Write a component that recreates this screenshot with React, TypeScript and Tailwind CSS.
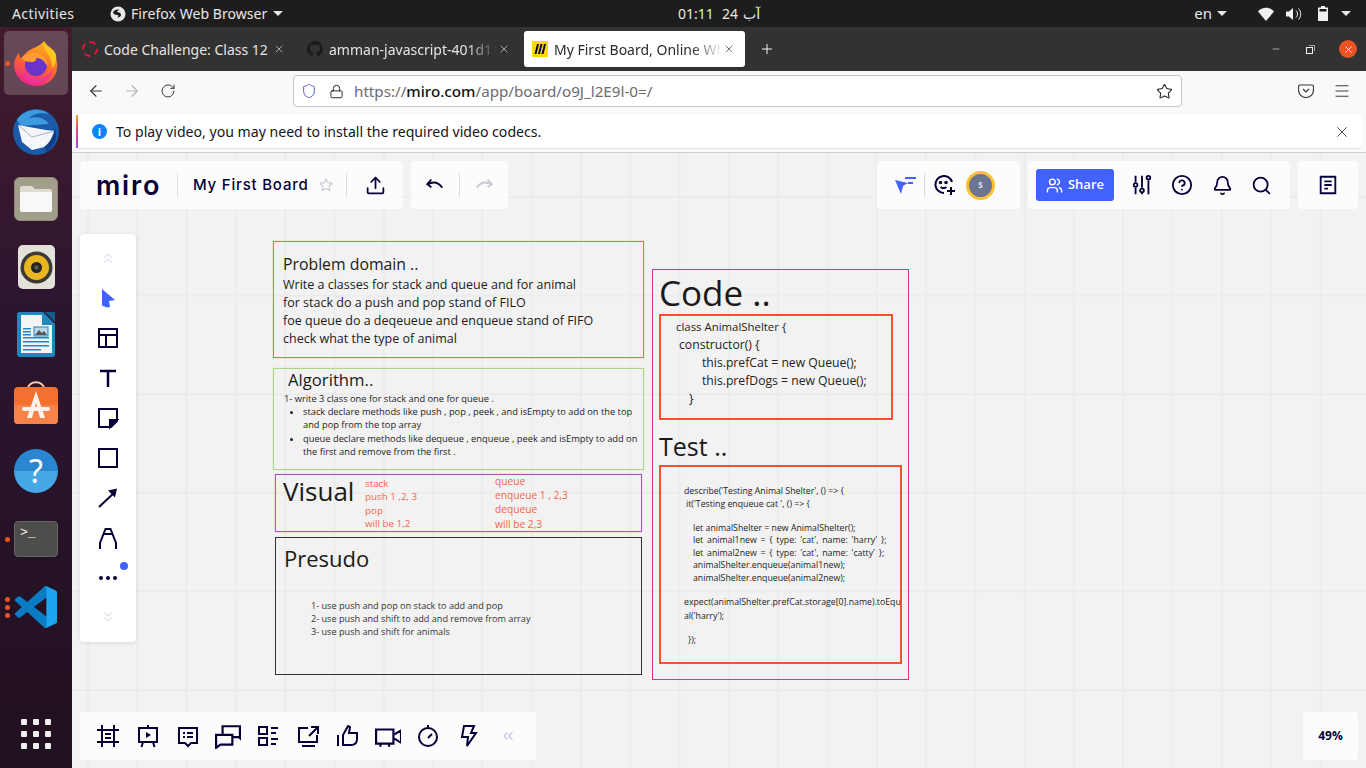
import { ArrowLeft, ArrowRight, Bell, ChevronsDown, ChevronsLeft, ChevronsUp, CircleHelp, Lock, Menu, Minus, Plus, RotateCw, Search, Shield, Star, Upload, Users, X } from 'lucide-react';
import type { ReactNode } from 'react';

const NAVY = '#050038';

function Ico({ children, size = 24, className = '' }: { children: ReactNode; size?: number; className?: string }) {
  return (
    <svg width={size} height={size} viewBox="0 0 24 24" fill="none" stroke={NAVY} strokeWidth="2" className={className}>
      {children}
    </svg>
  );
}

function Caret({ className = '' }: { className?: string }) {
  return <span className={`inline-block w-0 h-0 border-l-[5px] border-r-[5px] border-t-[5px] border-l-transparent border-r-transparent border-t-[#e6e6e6] ${className}`}></span>;
}

/* dock icons */
function FirefoxIcon() {
  return (
    <svg width="48" height="48" viewBox="0 0 48 48">
      <defs>
        <linearGradient id="ffBody" x1="0.7" y1="0" x2="0.3" y2="1">
          <stop offset="0" stopColor="#ffb61e" />
          <stop offset="0.5" stopColor="#ff6a2b" />
          <stop offset="1" stopColor="#e8208f" />
        </linearGradient>
      </defs>
      <path d="M32 2c1 5 5 7 8 11 4 5 6 10 5 16-1 11-10 18-21 18C12 47 3 38 2 27c0-5 2-10 5-13 0 3 1 5 3 6 2-6 7-9 12-11 4-2 8-4 10-7z" fill="url(#ffBody)" />
      <circle cx="24" cy="26" r="11" fill="#6a33c9" />
      <path d="M9 19c5-5 13-7 19-4 5 2 8 7 7 12-2-5-6-8-11-8 1 2-1 4-4 4-5 0-8-1-11-4z" fill="#ff9d2e" />
      <path d="M32 2c-1 5 1 9 4 13 3 5 4 9 4 14 3-3 5-8 4-13-1-6-9-8-12-14z" fill="#ffc61e" />
      <path d="M13 32c3 6 10 9 17 7 5-1 9-5 11-10-1 9-9 15-18 15-8 0-13-5-10-12z" fill="#f0359a" />
    </svg>
  );
}

function ThunderbirdIcon() {
  return (
    <svg width="50" height="50" viewBox="0 0 50 50">
      <circle cx="25" cy="26" r="23" fill="#1a5aa8" />
      <path d="M6 14C12 4 28 0 38 8c-8-2-16 0-20 4 8-2 16 0 20 6L10 20z" fill="#3d9be0" />
      <path d="M7 19l28 5 9 1-2 14-21 5-10-8z" fill="#f5f6fa" />
      <path d="M7 19l14 12 23-6" fill="none" stroke="#a9b0bf" strokeWidth="1" />
      <path d="M44 22c3 8 0 18-8 24l-3-5c6-4 9-11 11-19z" fill="#0f3f86" />
    </svg>
  );
}

function FilesIcon() {
  return (
    <div className="w-11 h-11 rounded-[6px] bg-[#a39d8c] border border-[#8e8978] flex items-center justify-center">
      <svg width="34" height="30" viewBox="0 0 34 30">
        <path d="M1 4a2 2 0 0 1 2-2h10l3 3h15a2 2 0 0 1 2 2v4H1z" fill="#dedbd2" />
        <path d="M1 8h30a2 2 0 0 1 2 2v16a2 2 0 0 1-2 2H3a2 2 0 0 1-2-2z" fill="#faf9f7" />
      </svg>
    </div>
  );
}

function RhythmboxIcon() {
  return (
    <div className="w-[37px] h-11 rounded-[5px] bg-[#e4e1d8] flex items-center justify-center">
      <svg width="33" height="33" viewBox="0 0 33 33">
        <circle cx="16.5" cy="16.5" r="16" fill="#3b3a38" />
        <circle cx="16.5" cy="16.5" r="12.5" fill="#e9b622" />
        <circle cx="16.5" cy="16.5" r="5.5" fill="#25231f" />
        <circle cx="16.5" cy="16.5" r="2.2" fill="#5a5852" />
      </svg>
    </div>
  );
}

function WriterIcon() {
  return (
    <svg width="38" height="46" viewBox="0 0 38 46">
      <path d="M3 0h23l12 12v30a3 3 0 0 1-3 3H3a3 3 0 0 1-3-3V3a3 3 0 0 1 3-3z" fill="#1e87be" />
      <path d="M4 3h21v10h10v28H4z" fill="#f3f4f4" />
      <path d="M28 0l10 10V0z" fill="#135d8c" />
      <path d="M6 16h8v1.500H6zM6 19h8v1.500H6zM6 22h8v1.500H6zM6 25h26v1.500H6zM6 29h26v1.500H6zM6 33h26v1.500H6zM6 37h18v1.500H6z" fill="#1e87be" />
      <rect x="17" y="15" width="14" height="9" fill="#bcd7e7" stroke="#1e87be" />
      <path d="M18 23l4-5 3 3 2-2 3 4z" fill="#555" />
    </svg>
  );
}

function SoftwareIcon() {
  return (
    <svg width="44" height="44" viewBox="0 0 44 44">
      <path d="M14 8c0-9 16-9 16 0" fill="none" stroke="#f1d3b4" strokeWidth="2" />
      <rect x="0" y="6" width="44" height="37" rx="4" fill="#f3702f" />
      <path d="M0 24h44v15a4 4 0 0 1-4 4H4a4 4 0 0 1-4-4z" fill="#f7824a" />
      <path d="M22 10l-9 27h5l4-15 4 15h5z" fill="#fdf3ec" />
      <rect x="8" y="26" width="28" height="4" rx="2" fill="#fdf3ec" />
    </svg>
  );
}

function HelpIcon() {
  return (
    <div className="w-11 h-11 rounded-full bg-[linear-gradient(#2a86d0_0%,#2a86d0_50%,#46a7e6_50%,#46a7e6_100%)] flex items-center justify-center text-white text-[32px] leading-none">?</div>
  );
}

function TerminalIcon() {
  return (
    <div className="w-11 h-9 rounded-[4px] bg-[#4d4d4b] border border-[#656563] pl-[5px] text-[#f5f5f5] text-[13px] leading-[22px] [font-family:'Liberation_Mono',monospace]">&gt;_</div>
  );
}

function VsCodeIcon() {
  return (
    <svg width="42" height="42" viewBox="0 0 100 100">
      <path d="M96.500 10.800L75.900.9a6.200 6.200 0 0 0-7.100 1.200L29.300 38.100 12.100 25.100a4.200 4.200 0 0 0-5.300.2L1.300 30.300a4.200 4.200 0 0 0 0 6.200L16.200 50 1.300 63.600a4.200 4.200 0 0 0 0 6.200l5.500 5a4.200 4.200 0 0 0 5.300.2L29.300 62l39.500 36a6.200 6.200 0 0 0 7.100 1.200l20.600-9.900A6.200 6.200 0 0 0 100 83.700V16.300a6.200 6.200 0 0 0-3.500-5.500zM75 72.700L45 50l30-22.700z" fill="#0a7cc4" />
      <path d="M75.900 99.100a6.200 6.200 0 0 1-7.100-1.200c2.300 2.300 6.200.7 6.200-2.600V4.700c0-3.300-3.900-4.900-6.200-2.600a6.200 6.200 0 0 1 7.100-1.200l20.600 9.900A6.200 6.200 0 0 1 100 16.300v67.400a6.200 6.200 0 0 1-3.500 5.600z" fill="#1fa5f0" />
    </svg>
  );
}

function Dots({ n }: { n: number }) {
  return (
    <div className="absolute left-[5px] top-0 bottom-0 flex flex-col justify-center gap-[3px]">
      {Array.from({ length: n }).map((_, i) => (
        <span key={i} className="w-[5px] h-[5px] rounded-full bg-[#e95420]"></span>
      ))}
    </div>
  );
}

const DOCK = [
  { id: 'firefox', icon: <FirefoxIcon />, dots: 1, active: true },
  { id: 'thunderbird', icon: <ThunderbirdIcon />, dots: 0 },
  { id: 'files', icon: <FilesIcon />, dots: 0 },
  { id: 'rhythmbox', icon: <RhythmboxIcon />, dots: 0 },
  { id: 'writer', icon: <WriterIcon />, dots: 0 },
  { id: 'software', icon: <SoftwareIcon />, dots: 0 },
  { id: 'help', icon: <HelpIcon />, dots: 0 },
  { id: 'terminal', icon: <TerminalIcon />, dots: 1 },
  { id: 'vscode', icon: <VsCodeIcon />, dots: 3 },
];

function Dock() {
  return (
    <aside className="w-[72px] shrink-0 flex flex-col pt-[2px] bg-[linear-gradient(#421b2c,#2c1530_40%,#21101f)]">
      {DOCK.map((item) => (
        <div key={item.id} className="relative h-[68px] flex items-center justify-center">
          <div className={`w-16 h-16 rounded-[5px] flex items-center justify-center ${item.active ? 'bg-white/20' : ''}`}>{item.icon}</div>
          {item.dots > 0 && <Dots n={item.dots} />}
        </div>
      ))}
      <div className="mt-auto mb-[19px] mx-auto grid grid-cols-3 gap-[6px]">
        {Array.from({ length: 9 }).map((_, i) => (
          <span key={i} className="w-[6px] h-[6px] rounded-[1px] bg-[#eeeeee]"></span>
        ))}
      </div>
    </aside>
  );
}

function TopBar() {
  return (
    <header className="h-[27px] shrink-0 bg-[#1d1d1d] text-[#e8e8e8] text-[14px] flex items-center">
      <div className="w-[678px] flex items-center shrink-0">
        <span className="ml-3 w-[98px] tracking-[0.4px]">Activities</span>
        <svg width="16" height="16" viewBox="0 0 16 16" className="mr-[5px]">
          <circle cx="8" cy="8" r="7.500" fill="#e8e8e8" />
          <path d="M3 6c2-3 5-3 7-2-2 0-3 1-3 2 2 0 4 1 4 3s-3 3-4 2c2 0 2-2 0-2-2 0-4-1-4-3z" fill="#1d1d1d" />
        </svg>
        <span className="tracking-[0.05px]">Firefox Web Browser</span>
        <Caret className="ml-[6px]" />
      </div>
      <div className="flex items-center text-[14px] [font-family:'Noto_Sans','DejaVu_Sans',sans-serif]">
        <span className="w-[44px]">01:11</span>
        <span className="w-[21px]">24</span>
        <span>آب</span>
      </div>
      <div className="ml-auto flex items-center">
        <span className="text-[15px]">en</span>
        <Caret className="ml-[5px] mr-[31px]" />
        <svg width="16" height="14" viewBox="0 0 16 14" className="mr-3">
          <path d="M0 4.500C4-.5 12-.5 16 4.500L8 14z" fill="#f0f0f0" />
        </svg>
        <svg width="16" height="14" viewBox="0 0 16 14" className="mr-[16px]">
          <path d="M0 4.500h3L7 1v12L3 9.500H0z" fill="#f0f0f0" />
          <path d="M10 3.500c2 2 2 5 0 7M12.500 1.500c3 3 3 8 0 11" stroke="#f0f0f0" strokeWidth="1" fill="none" />
        </svg>
        <svg width="10" height="15" viewBox="0 0 10 15" className="mr-[13px]">
          <path d="M3 0h4v1.500h3V15H0V1.500h3z" fill="#f0f0f0" />
          <rect x="1.500" y="3" width="7" height="2.500" fill="#1d1d1d" />
        </svg>
        <Caret className="mr-[15px]" />
      </div>
    </header>
  );
}

function Tab({ label, icon, active, className, faded }: { label: string; icon: ReactNode; active?: boolean; className: string; faded?: boolean }) {
  return (
    <div className={`h-9 flex items-center rounded-[3px] shrink-0 ${className} ${active ? 'bg-white text-[#2a2a2e]' : 'text-[#e4e4e4]'}`}>
      <span className="w-4 h-4 shrink-0 mr-[6px] flex items-center justify-center">{icon}</span>
      <span className={`flex-1 whitespace-nowrap overflow-hidden text-[14px] ${faded ? '[mask-image:linear-gradient(90deg,#000_82%,transparent)]' : ''}`}>{label}</span>
      <X size={12} strokeWidth={1.300} className="ml-[1px] shrink-0" />
    </div>
  );
}

function TabBar() {
  return (
    <div className="h-11 shrink-0 bg-[#333233] flex items-center pl-px">
      <Tab
        className="w-[225px] pl-[9px] pr-[13px]"
        label="Code Challenge: Class 12"
        icon={<span className="w-4 h-4 rounded-full border-2 border-dashed border-[#e3123c]"></span>}
      />
      <Tab
        faded
        className="w-[226px] pl-[9px] pr-[14px]"
        label="amman-javascript-401d11"
        icon={
          <svg width="16" height="16" viewBox="0 0 16 16">
            <path d="M8 0a8 8 0 0 0-2.500 15.600c.4.1.5-.2.5-.4v-1.400c-2.200.5-2.700-1-2.700-1-.4-.9-.9-1.200-.9-1.200-.7-.5.1-.5.1-.5.8.1 1.200.8 1.200.8.7 1.200 1.900.9 2.300.7.1-.5.3-.9.5-1.100-1.800-.2-3.600-.9-3.600-4 0-.9.3-1.600.8-2.100-.1-.2-.4-1 .1-2.100 0 0 .7-.2 2.200.8a7.600 7.600 0 0 1 4 0c1.500-1 2.200-.8 2.200-.8.4 1.100.2 1.900.1 2.100.5.6.8 1.300.8 2.100 0 3.100-1.900 3.700-3.600 3.900.3.2.5.7.5 1.500v2.200c0 .2.100.5.6.4A8 8 0 0 0 8 0z" fill="#1a1a1b" />
          </svg>
        }
      />
      <Tab
        active
        faded
        className="w-[221px] pl-[8px] pr-[10px]"
        label="My First Board, Online Whiteboard"
        icon={
          <svg width="16" height="16" viewBox="0 0 16 16">
            <rect width="16" height="16" fill="#ffd800" />
            <path d="M5 3h2L4.500 13h-2zM8.500 3h2L8 13H6zM12 3h2l-2.500 10h-2z" fill="#050038" />
          </svg>
        }
      />
      <Plus size={16} strokeWidth={1.500} className="ml-[14px] text-[#f2f2f2]" />
      <div className="ml-auto flex items-center text-[#f2f2f2]">
        <Minus size={10} strokeWidth={1.500} className="mr-[25px]" />
        <svg width="9" height="9" viewBox="0 0 9 9" className="mr-[24px]">
          <rect x="0.500" y="2.500" width="6" height="6" fill="none" stroke="#f2f2f2" />
          <path d="M3 .5h5.500V6" fill="none" stroke="#f2f2f2" strokeOpacity="0.6" />
        </svg>
        <span className="w-[18px] h-[18px] mr-[9px] rounded-full bg-[#e95420] flex items-center justify-center">
          <X size={11} strokeWidth={2} className="text-white" />
        </span>
      </div>
    </div>
  );
}

function NavBar() {
  return (
    <div className="h-11 shrink-0 bg-[#f9f9fa] flex items-center pb-1 text-[#38383d]">
      <ArrowLeft size={18} strokeWidth={1.500} className="ml-[15px]" />
      <ArrowRight size={18} strokeWidth={1.500} className="ml-[18px] text-[#b3b3b7]" />
      <RotateCw size={16} strokeWidth={1.500} className="ml-[19px]" />
      <div className="ml-[117px] w-[889px] h-8 bg-white border border-[#c4c4c6] rounded-[4px] flex items-center pl-[7px] pr-2">
        <Shield size={16} strokeWidth={1.500} className="text-[#5b5bd6]" />
        <Lock size={15} strokeWidth={1.500} className="ml-[12px] text-[#222]" />
        <span className="ml-[10px] text-[15.200px] text-[#6b6b70]">https://<span className="text-[#111] font-medium">miro.com</span>/app/board/o9J_l2E9l-0=/</span>
        <Star size={17} strokeWidth={1.500} className="ml-auto text-[#222]" />
      </div>
      <svg width="16" height="14" viewBox="0 0 16 14" className="ml-[116px]">
        <path d="M2 1h12a1.500 1.500 0 0 1 1.500 1.500V6A7.500 7.500 0 0 1 .5 6V2.500A1.500 1.500 0 0 1 2 1z" fill="none" stroke="#38383d" strokeWidth="1.200" />
        <path d="M5 5l3 3 3-3" fill="none" stroke="#38383d" strokeWidth="1.200" />
      </svg>
      <Menu size={18} strokeWidth={1.300} className="ml-[19px]" />
    </div>
  );
}

function InfoBar() {
  return (
    <div className="h-[38px] shrink-0 bg-[#f9f9fa] px-1 pb-1 border-b border-[#cfcfd1]">
      <div className="h-[33px] bg-white rounded-[3px] flex items-center text-[14.100px] text-[#15141a] shadow-[0_1px_1px_rgba(0,0,0,0.08)]">
        <span className="w-[2px] h-full bg-[linear-gradient(#f5a623,#e0457b_45%,#9b4fe0)]"></span>
        <span className="ml-[14px] w-[15px] h-[15px] rounded-full bg-[#0a84ff] text-white text-[11px] leading-[15px] text-center font-bold">i</span>
        <span className="ml-[9px]">To play video, you may need to install the required video codecs.</span>
        <X size={18} strokeWidth={1.200} className="ml-auto mr-[11px] text-[#45454a]" />
      </div>
    </div>
  );
}

function Panel({ children, className = '' }: { children: ReactNode; className?: string }) {
  return <div className={`h-12 bg-white/80 rounded-[4px] flex items-center ${className}`}>{children}</div>;
}

function Divider({ className = '' }: { className?: string }) {
  return <span className={`w-px h-6 bg-[#dcdce3] ${className}`}></span>;
}

function BoardToolbar() {
  return (
    <div className="absolute left-2 right-2 top-2 flex">
      <Panel className="w-[323px] mr-2">
        <span className="ml-[16px] w-[65px] text-[27px] font-semibold leading-none tracking-[1.800px] text-[#050038] [font-family:'Inter',sans-serif]">miro</span>
        <Divider className="ml-[16px]" />
        <span className="ml-[15px] text-[15px] font-medium tracking-[0.8px] text-[#050038] [font-family:'Inter',sans-serif]">My First Board</span>
        <Star size={14} strokeWidth={2} className="ml-[10px] text-[#c9c9d6]" />
        <Divider className="ml-[13px]" />
        <Upload size={21} strokeWidth={2} className="ml-[18px] text-[#050038]" />
      </Panel>
      <Panel className="w-[97px]">
        <Ico size={22} className="ml-[13px]"><path d="M8 6L3.500 11 8 14.500" /><path d="M4 11c6-3 12-2 16 4" /></Ico>
        <Divider className="ml-[13px]" />
        <Ico size={22} className="ml-[13px] opacity-20"><path d="M16 6l4.500 5-4.500 3.500" /><path d="M20 11c-6-3-12-2-16 4" /></Ico>
      </Panel>
      <Panel className="w-[143px] ml-auto">
        <svg width="24" height="24" viewBox="0 0 24 24" className="ml-[17px]">
          <path d="M1 7l13 3-5 3-2 8z" fill="#4262ff" />
          <path d="M11 4h11v2H11zM14 9h5v2h-5z" fill="#4262ff" />
        </svg>
        <Divider className="ml-[6px] h-[24px]" />
        <svg width="24" height="24" viewBox="0 0 24 24" fill="none" stroke={NAVY} strokeWidth="2" className="ml-[7px]">
          <path d="M12 20a8.500 8.500 0 1 1 8-11" />
          <path d="M8.500 14c2 1.500 4 1.500 6 0" />
          <circle cx="8.500" cy="9.500" r="0.800" />
          <circle cx="14" cy="9.500" r="0.800" />
          <path d="M19 14v8M15 18h8" />
        </svg>
        <span className="ml-[10px] w-[29px] h-[29px] rounded-full bg-[#6b7591] border-[3px] border-[#fdc02f] text-[8px] font-bold text-[#e5e7ee] flex items-center justify-center">S</span>
      </Panel>
      <Panel className="w-[262px] ml-2">
        <span className="ml-2 w-[78px] h-8 rounded-[3px] bg-[#4262ff] text-white text-[13px] font-semibold flex items-center justify-center gap-[5px]">
          <Users size={17} strokeWidth={2} />Share
        </span>
        <Ico size={22} className="ml-[17px]">
          <path d="M5 2v7M5 15v7M12 2v13M12 20v2M19 7v15" />
          <circle cx="5" cy="12" r="2" />
          <circle cx="12" cy="18" r="2" />
          <circle cx="19" cy="4" r="2" />
        </Ico>
        <CircleHelp size={22} strokeWidth={2} className="ml-[18px] text-[#050038]" />
        <Bell size={21} strokeWidth={2} className="ml-[19px] text-[#050038]" />
        <Search size={21} strokeWidth={2} className="ml-[18px] text-[#050038]" />
      </Panel>
      <Panel className="w-[60px] ml-2 justify-center">
        <Ico size={22}>
          <path d="M4 3h16v18H4z" />
          <path d="M8 8h8M8 12h8M8 16h4" />
        </Ico>
      </Panel>
    </div>
  );
}

const SIDE_ITEMS: { id: string; node: ReactNode }[] = [
  {
    id: 'select',
    node: (
      <svg width="24" height="24" viewBox="0 0 24 24">
        <path d="M6 3l13 11-6 1 1 6-3 .5-5-2z" fill="#4262ff" />
      </svg>
    ),
  },
  { id: 'layout', node: <Ico><path d="M3 3h18v18H3zM3 9h18M10 9v12" /></Ico> },
  { id: 'text', node: <Ico><path d="M4 5h16M12 5v16" strokeWidth="2.500" /></Ico> },
  { id: 'sticky', node: <Ico><path d="M3 3h18v12l-6 6H3z" /><path d="M21 14h-7v7z" fill={NAVY} /></Ico> },
  { id: 'shape', node: <Ico><rect x="3" y="3" width="18" height="18" /></Ico> },
  { id: 'arrow', node: <Ico><path d="M3 21L19 6" /><path d="M12 4.500l9-2-2 9z" fill={NAVY} stroke="none" /></Ico> },
  { id: 'pen', node: <Ico><path d="M4 23v-6L9.500 3h5L20 17v6M7 8h10" /></Ico> },
  {
    id: 'more',
    node: (
      <div className="relative w-6 h-6 flex items-center justify-center">
        <svg width="20" height="6" viewBox="0 0 20 6"><circle cx="3" cy="3" r="2" fill={NAVY} /><circle cx="10" cy="3" r="2" fill={NAVY} /><circle cx="17" cy="3" r="2" fill={NAVY} /></svg>
        <span className="absolute -top-1 -right-2 w-2 h-2 rounded-full bg-[#4262ff]"></span>
      </div>
    ),
  },
];

function SideToolbar() {
  return (
    <div className="absolute left-2 top-[81px] w-14 h-[408px] bg-white rounded-[4px] shadow-[0_1px_4px_rgba(5,0,56,0.1)] flex flex-col items-center pt-4">
      <ChevronsUp size={16} strokeWidth={2} className="text-[#e4e4ec]" />
      <div className="mt-[12px] flex flex-col items-center">
        {SIDE_ITEMS.map((it) => (
          <div key={it.id} className="h-10 flex items-center justify-center">{it.node}</div>
        ))}
      </div>
      <ChevronsDown size={16} strokeWidth={2} className="mt-[11px] text-[#e4e4ec]" />
    </div>
  );
}

const BOTTOM_ITEMS: { id: string; node: ReactNode }[] = [
  { id: 'frame', node: <Ico><path d="M1 6h22M1 18h22M6 1v22M18 1v22M9 10h6M9 14h6" /></Ico> },
  { id: 'present', node: <Ico><path d="M3 4h18v14H3zM12 1v3M7 18l-1.500 5M17 18l1.500 5" /><path d="M10 8l5 3-5 3z" fill={NAVY} stroke="none" /></Ico> },
  { id: 'comment', node: <Ico><path d="M3 4h18v15h-6l-3 3-3-3H3z" /><path d="M7 9h2M11 9h6M7 13h2M11 13h6" /></Ico> },
  { id: 'chat', node: <Ico size={26}><path d="M1 23V11h15v9H5z" /><path d="M7 11V3h16v11l-1-1h-6" /></Ico> },
  { id: 'card', node: <Ico><path d="M3 3h8v7H3zM3 14h8v7H3zM15 4h7M15 9h5M15 15h7M15 20h5" /></Ico> },
  { id: 'share', node: <Ico><path d="M12 4H3v14h18v-7M15 3h7v7M22 3l-9 9M6 22h13" /></Ico> },
  { id: 'like', node: <Ico><path d="M2 11v11M7 21V11l5-9 2 1-1 6h8v6c0 4-2 6-6 6z" /></Ico> },
  { id: 'video', node: <Ico size={26}><path d="M1 6h16v13H1zM17 11l7-4v11l-7-4M5 19v3M13 19v3" /></Ico> },
  { id: 'timer', node: <Ico><circle cx="12" cy="13" r="9" /><path d="M12 1v3M12 14l4-4" /></Ico> },
  { id: 'bolt', node: <Ico><path d="M8 2h10l-3 7h5L11 22l1-9H6z" /></Ico> },
];

function BottomToolbar() {
  return (
    <div className="absolute left-2 bottom-2 w-[456px] h-12 bg-white/80 rounded-[4px] flex items-center pl-2">
      {BOTTOM_ITEMS.map((it) => (
        <div key={it.id} className="w-10 h-10 flex items-center justify-center">{it.node}</div>
      ))}
      <ChevronsLeft size={16} strokeWidth={2} className="ml-3 text-[#c9c9d6]" />
    </div>
  );
}

function Board() {
  return (
    <>
      <section className="absolute left-[201px] top-[88px] w-[371px] h-[117px] border border-[#fa6a50] shadow-[0_0_1px_rgba(250,106,80,0.6)] pt-[11px] pl-[9px] text-[#1a1a1a]">
        <h2 className="text-[15.800px] leading-[23px]">Problem domain ..</h2>
        <p className="text-[12.500px] leading-[18px]">Write a classes for stack and queue and for animal<br />for stack do a push and pop stand of FILO<br />foe queue do a deqeueue and enqueue stand of FIFO<br />check what the type of animal</p>
      </section>

      <section className="absolute left-[201px] top-[215px] w-[371px] h-[102px] border border-[#a9d884] shadow-[0_0_1px_rgba(169,216,132,0.6)] pl-[10px] text-[#1a1a1a]">
        <h2 className="pl-[4px] text-[16.700px] leading-[22px]">Algorithm..</h2>
        <div className="text-[9.300px] leading-[13.200px] text-[#222] mt-[1px]">
          <p>1- write 3 class one for stack and one for queue .</p>
          <ul className="list-disc pl-[19px] pr-[2px]">
            <li>stack declare methods like push , pop , peek , and isEmpty to add on the top and pop from the top array</li>
            <li>queue declare methods like dequeue , enqueue , peek and isEmpty to add on the first and remove from the first .</li>
          </ul>
        </div>
      </section>

      <section className="absolute left-[203px] top-[321px] w-[367px] h-[58px] border border-[#b151c4] shadow-[0_0_1px_rgba(177,81,196,0.6)] text-[#1a1a1a] flex">
        <h2 className="pl-[7px] w-[89px] text-[26px] leading-[33px]">Visual</h2>
        <p className="w-[130px] pt-[2px] text-[9.800px] leading-[13.400px] text-[#f8644c]">stack<br />push 1 ,2, 3<br />pop<br />will be 1,2</p>
        <p className="-mt-[1px] text-[10.200px] leading-[14.200px] text-[#f8644c]">queue<br />enqueue 1 , 2,3<br />dequeue<br />will be 2,3</p>
      </section>

      <section className="absolute left-[203px] top-[384px] w-[367px] h-[138px] border border-[#333333] pl-[8px] text-[#1a1a1a]">
        <h2 className="pt-[6px] text-[22px] leading-[28px]">Presudo</h2>
        <p className="pl-[27px] pt-[27px] text-[9.150px] leading-[13px] text-[#333]">1- use push and pop on stack to add and pop<br />2- use push and shift to add and remove from array<br />3- use push and shift for animals</p>
      </section>

      <section className="absolute left-[580px] top-[116px] w-[257px] h-[411px] border border-[#ea2b8b] text-[#1a1a1a] pl-[6px]">
        <h2 className="pt-[3px] text-[35px] leading-[40px]">Code ..</h2>
        <div className="mt-[1px] w-[234px] h-[106px] border-2 border-[#f4512c] text-[12.200px] leading-[17.900px] text-[#222] pt-[2px] whitespace-pre">
          <p className="pl-[15px] text-[11.400px]">class AnimalShelter {'{'}</p>
          <p className="pl-[18px]">constructor() {'{'}</p>
          <p className="pl-[41px]">this.prefCat = new Queue();</p>
          <p className="pl-[41px]">this.prefDogs = new Queue();</p>
          <p className="pl-[28px]">{'}'}</p>
        </div>
        <h2 className="pt-[9px] text-[25px] leading-[34px]">Test ..</h2>
        <div className="mt-[2px] w-[243px] h-[199px] border-2 border-[#f4512c] pl-[23px] pt-[18px] text-[8.750px] leading-[12.400px] text-[#222] whitespace-nowrap overflow-hidden">
          <p className="leading-[13px]">describe('Testing Animal Shelter', () =&gt; {'{'}</p>
          <p className="pl-[2px] leading-[13px]">it('Testing enqueue cat ', () =&gt; {'{'}</p>
          <p className="pt-[11px] pl-[9px]">let animalShelter = new AnimalShelter();</p>
          <p className="pl-[9px] [word-spacing:1.500px]">let animal1new = {'{'} type: 'cat', name: 'harry' {'}'};</p>
          <p className="pl-[9px] [word-spacing:1.500px]">let animal2new = {'{'} type: 'cat', name: 'catty' {'}'};</p>
          <p className="pl-[9px]">animalShelter.enqueue(animal1new);</p>
          <p className="pl-[9px]">animalShelter.enqueue(animal2new);</p>
          <p className="pt-[11px] leading-[14px]">expect(animalShelter.prefCat.storage[0].name).toEqu<br />al('harry');</p>
          <p className="pt-[11px] pl-[4px]">{'}'});</p>
        </div>
      </section>
    </>
  );
}

function Canvas() {
  return (
    <main className="relative flex-1 overflow-hidden bg-[#f2f2f2] bg-[linear-gradient(#ececec_2px,transparent_2px),linear-gradient(90deg,#ececec_2px,transparent_2px)] bg-[size:49.300px_98.600px] bg-[position:15px_43px] [font-family:'Open_Sans',sans-serif]">
      <Board />
      <BoardToolbar />
      <SideToolbar />
      <BottomToolbar />
      <div className="absolute right-2 bottom-2 w-[55px] h-12 bg-white/80 rounded-[4px] flex items-center justify-center text-[12px] font-bold text-[#050038]">49%</div>
    </main>
  );
}

export default function App() {
  return (
    <div className="w-[1366px] h-[768px] overflow-hidden flex flex-col [font-family:'Noto_Sans','DejaVu_Sans',sans-serif]">
      <TopBar />
      <div className="flex-1 flex min-h-0">
        <Dock />
        <div className="flex-1 flex flex-col min-w-0">
          <TabBar />
          <NavBar />
          <InfoBar />
          <Canvas />
        </div>
      </div>
    </div>
  );
}
